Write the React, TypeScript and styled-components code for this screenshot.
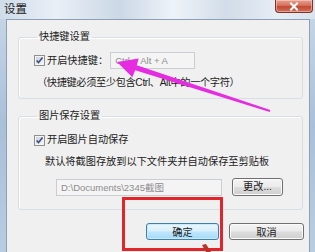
import React from "react";
import styled, { createGlobalStyle } from "styled-components";

const Global = createGlobalStyle`
  html, body { margin: 0; padding: 0; background: #ffffff; overflow: hidden; }
  * { box-sizing: border-box; }
`;

const Window = styled.div`
  position: relative;
  width: 315px;
  height: 252px;
  display: flex;
  flex-direction: column;
  overflow: hidden;
  background: linear-gradient(180deg, #c9d8e8 0%, #a9c0d9 50%, #b9cde0 100%);
  font-family: "Liberation Sans", "Noto Sans CJK SC", sans-serif;
  color: #1b1b1b;
`;

const TitleBar = styled.div`
  height: 19px;
  flex: none;
  display: flex;
  align-items: flex-start;
  justify-content: space-between;
  padding: 0 2px 0 4px;
  background: linear-gradient(
    90deg,
    #cfdcea 0%,
    #e9eff6 18%,
    #cbd8e6 38%,
    #eef3f8 55%,
    #d2dde9 72%,
    #e6edf5 88%,
    #d8e3ee 100%
  );
`;

const Title = styled.span`
  font-size: 11.5px;
  line-height: 18px;
  color: #202020;
`;

const CloseButton = styled.div`
  width: 38px;
  height: 13px;
  display: flex;
  align-items: center;
  justify-content: center;
  border: 1px solid #7a3328;
  border-top: none;
  border-radius: 0 0 4px 4px;
  background: linear-gradient(180deg, #e7a293 0%, #d6705c 45%, #c34a33 55%, #d0705a 100%);
  box-shadow: inset 0 0 0 1px rgba(255, 220, 210, 0.5);
`;

const Client = styled.div`
  position: relative;
  flex: 1;
  margin: 0 5px 0 6px;
  background: #f0f0f0;
  border: 1px solid #8d9fb4;
  border-bottom: none;
  padding: 10px 6px 0 11px;
  display: flex;
  flex-direction: column;
`;

const Group = styled.fieldset<{ $top?: number; $padTop: number; $padBottom: number }>`
  margin: ${(p) => p.$top ?? 0}px 0 0 0;
  padding: ${(p) => p.$padTop}px 6px ${(p) => p.$padBottom}px 15px;
  border: 1px solid #d5dfe5;
  border-radius: 3px;
  box-shadow: inset 1px 1px 0 #ffffff;
  min-width: 0;
  display: flex;
  flex-direction: column;
`;

const Legend = styled.legend`
  font-size: 10.2px;
  line-height: 14px;
  padding: 0 2px;
  margin-left: 3px;
  color: #1b1b1b;
`;

const Row = styled.div<{ $mt?: number; $indent?: number; $h?: number; $tight?: boolean }>`
  display: flex;
  align-items: center;
  height: ${(p) => p.$h ?? 14}px;
  margin-top: ${(p) => p.$mt ?? 0}px;
  margin-left: ${(p) => p.$indent ?? 0}px;
  font-size: 10.2px;
  line-height: 14px;
  letter-spacing: ${(p) => (p.$tight ? "-0.35px" : "0")};
  white-space: nowrap;
`;

const CheckLabel = styled.span`
  margin-left: 2px;
`;

const TextInput = styled.div<{ $w: number; $ml: number }>`
  width: ${(p) => p.$w}px;
  height: 17px;
  margin-left: ${(p) => p.$ml}px;
  border: 1px solid #c9ced3;
  background: #f4f4f4;
  color: #8c8c8c;
  font-size: 9.5px;
  line-height: 15px;
  padding-left: 4px;
  overflow: hidden;
  white-space: nowrap;
`;

const Button = styled.div<{ $w: number; $primary?: boolean; $h?: number; $ml?: number }>`
  width: ${(p) => p.$w}px;
  height: ${(p) => p.$h ?? 17}px;
  margin-left: ${(p) => p.$ml ?? 0}px;
  display: flex;
  align-items: center;
  justify-content: center;
  font-size: 10.2px;
  color: #1b1b1b;
  border-radius: 3px;
  border: 1px solid ${(p) => (p.$primary ? "#3c7fb1" : "#707070")};
  background: ${(p) =>
    p.$primary
      ? "linear-gradient(180deg, #eaf6fd 0%, #d9f0fc 48%, #bee6fd 52%, #a7d9f5 100%)"
      : "linear-gradient(180deg, #f4f4f4 0%, #ebebeb 48%, #dddddd 52%, #cfcfcf 100%)"};
  box-shadow: inset 0 0 0 1px ${(p) => (p.$primary ? "#c8ecfc" : "#fbfbfb")};
`;

const Footer = styled.div`
  display: flex;
  justify-content: flex-end;
  gap: 10px;
  margin-top: 13px;
  margin-right: -1px;
`;

const Highlight = styled.div`
  position: absolute;
  left: 122px;
  top: 197px;
  width: 101px;
  height: 54px;
  border: 3px solid #e2252a;
  pointer-events: none;
`;

const Annotation = styled.svg`
  position: absolute;
  left: 0;
  top: 0;
  pointer-events: none;
`;

const Checkbox = () => (
  <svg width="11" height="11" viewBox="0 0 11 11">
    <defs>
      <linearGradient id="cbg" x1="0" y1="0" x2="1" y2="1">
        <stop offset="0" stopColor="#cbcfd5" />
        <stop offset="1" stopColor="#f7f7f7" />
      </linearGradient>
    </defs>
    <rect x="0.5" y="0.5" width="10" height="10" fill="#f4f4f4" stroke="#8e8f8f" />
    <rect x="2" y="2" width="7" height="7" fill="url(#cbg)" />
    <path d="M2.6 5.4 L4.5 7.6 L8.6 2.6" fill="none" stroke="#3c4f86" strokeWidth="1.6" />
  </svg>
);

const CloseIcon = () => (
  <svg width="10" height="9" viewBox="0 0 10 9">
    <path d="M2 1.5 L8 7.5 M8 1.5 L2 7.5" stroke="#ffffff" strokeWidth="2" strokeLinecap="square" />
  </svg>
);

export default function App() {
  return (
    <>
      <Global />
      <Window>
        <TitleBar>
          <Title>设置</Title>
          <CloseButton>
            <CloseIcon />
          </CloseButton>
        </TitleBar>
        <Client>
          <Group $padTop={8} $padBottom={8}>
            <Legend>快捷键设置</Legend>
            <Row $h={17}>
              <Checkbox />
              <CheckLabel>开启快捷键：</CheckLabel>
              <TextInput $w={85} $ml={2}>Ctrl + Alt + A</TextInput>
            </Row>
            <Row $mt={7} $indent={3} $tight>
              （快捷键必须至少包含Ctrl、Alt中的一个字符）
            </Row>
          </Group>
          <Group $top={10} $padTop={10} $padBottom={13}>
            <Legend>图片保存设置</Legend>
            <Row>
              <Checkbox />
              <CheckLabel>开启图片自动保存</CheckLabel>
            </Row>
            <Row $mt={8} $indent={11}>
              默认将截图存放到以下文件夹并自动保存至剪贴板
            </Row>
            <Row $mt={9} $indent={22} $h={18}>
              <TextInput $w={166} $ml={0}>D:\Documents\2345截图</TextInput>
              <Button $w={51} $h={18} $ml={10}>更改...</Button>
            </Row>
          </Group>
          <Footer>
            <Button $w={73} $primary>确定</Button>
            <Button $w={75}>取消</Button>
          </Footer>
        </Client>
        <Highlight />
        <Annotation width="315" height="252" viewBox="0 0 315 252">
          <polygon
            points="117,62 138.7,58.5 136.8,65.2 270.3,110 269.7,111.9 135.2,70.2 132.3,77.2"
            fill="#e52ce0"
          />
          <polygon points="202,245 206,244 211,252 206,252" fill="#b8332c" />
        </Annotation>
      </Window>
    </>
  );
}
